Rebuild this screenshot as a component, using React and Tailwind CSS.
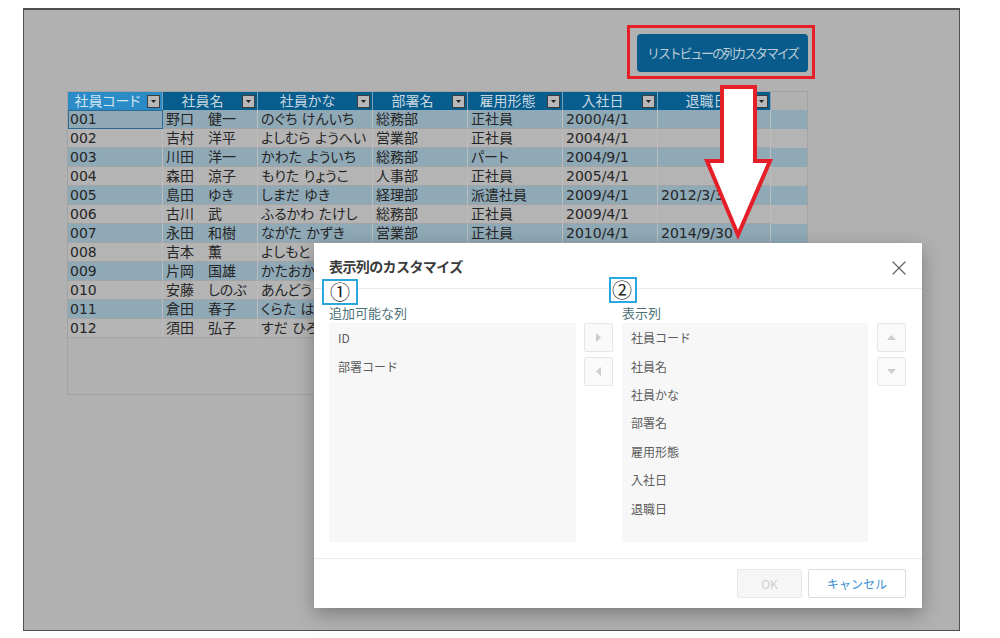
import { X } from 'lucide-react'

const COLS = [
  { label: '社員コード', w: 'w-[95px]' },
  { label: '社員名', w: 'w-[95px]' },
  { label: '社員かな', w: 'w-[115px]' },
  { label: '部署名', w: 'w-[95px]' },
  { label: '雇用形態', w: 'w-[95px]' },
  { label: '入社日', w: 'w-[95px]' },
  { label: '退職日', w: 'w-[113px]' },
]

const ROWS = [
  ['001', '野口　健一', 'のぐち けんいち', '総務部', '正社員', '2000/4/1', ''],
  ['002', '吉村　洋平', 'よしむら ようへい', '営業部', '正社員', '2004/4/1', ''],
  ['003', '川田　洋一', 'かわた よういち', '総務部', 'パート', '2004/9/1', ''],
  ['004', '森田　涼子', 'もりた りょうこ', '人事部', '正社員', '2005/4/1', ''],
  ['005', '島田　ゆき', 'しまだ ゆき', '経理部', '派遣社員', '2009/4/1', '2012/3/31'],
  ['006', '古川　武', 'ふるかわ たけし', '総務部', '正社員', '2009/4/1', ''],
  ['007', '永田　和樹', 'ながた かずき', '営業部', '正社員', '2010/4/1', '2014/9/30'],
  ['008', '吉本　薫', 'よしもと かおる', '人事部', '正社員', '2011/4/1', ''],
  ['009', '片岡　国雄', 'かたおか くにお', '営業部', '正社員', '2012/4/1', ''],
  ['010', '安藤　しのぶ', 'あんどう しのぶ', '経理部', 'パート', '2013/4/1', ''],
  ['011', '倉田　春子', 'くらた はるこ', '総務部', '正社員', '2014/4/1', ''],
  ['012', '須田　弘子', 'すだ ひろこ', '営業部', '正社員', '2015/4/1', ''],
]

const AVAILABLE = ['ID', '部署コード']
const SHOWN = ['社員コード', '社員名', '社員かな', '部署名', '雇用形態', '入社日', '退職日']

function Tri({ dir }) {
  const pts = {
    right: '2,0 7,4.5 2,9',
    left: '7,0 2,4.5 7,9',
    up: '0,7 4.5,2 9,7',
    down: '0,2 4.5,7 9,2',
  }[dir]
  return (
    <svg width="9" height="9" viewBox="0 0 9 9">
      <polygon points={pts} fill="#cdcdcd" />
    </svg>
  )
}

function SideBtn({ dir }) {
  return (
    <button className="flex h-[29px] w-[29px] items-center justify-center rounded-[2px] border border-[#e6e6e6] bg-[#fafafa]">
      <Tri dir={dir} />
    </button>
  )
}

function ColumnList({ items }) {
  return (
    <div className="h-[219px] bg-[#f7f7f7] pt-[1px]">
      {items.map((t) => (
        <div key={t} className="flex h-[28.4px] items-center pl-[9px] text-[12px] text-[#5c5c5c]">
          {t}
        </div>
      ))}
    </div>
  )
}

function Grid() {
  return (
    <div className="ml-[43px] mt-[12px] h-[304px] w-[741px] border border-[#a3a3a3] bg-[#b1b1b1] font-['DejaVu_Sans','Noto_Sans_CJK_JP',sans-serif] [font-feature-settings:'palt']">
      {/* header */}
      <div className="flex h-[18px]">
        {COLS.map((c, i) => (
          <div
            key={c.label}
            className={`${c.w} flex shrink-0 items-center border-r border-[#7d9db1] ${
              i === 0 ? 'bg-[#2b8bc7] text-[#d2e4ef]' : 'bg-[#075d8e] text-[#c8d6df]'
            }`}
          >
            <span className="flex-1 text-center text-[14px] leading-[18px]">{c.label}</span>
            <span className="mr-[2px] flex h-[13px] w-[13px] items-center justify-center border border-[#3d3d3d] bg-[#b9b9b9]">
              <svg width="5" height="3" viewBox="0 0 5 3">
                <polygon points="0,0 5,0 2.5,3" fill="#222" />
              </svg>
            </span>
          </div>
        ))}
      </div>
      {/* rows */}
      {ROWS.map((r, ri) => (
        <div key={r[0]} className={`flex h-[19px] ${ri % 2 === 0 ? 'bg-[#8fa9b7]' : 'bg-[#b4b4b4]'}`}>
          {r.map((v, ci) => (
            <div
              key={ci}
              className={`${COLS[ci].w} shrink-0 overflow-hidden whitespace-nowrap border-b border-r border-b-[#a4a4a4] border-r-[#bdbdbd] text-[14px] leading-[18px] text-[#262626] ${
                ci === 0 ? 'pl-[2px]' : 'pl-[3px]'
              } ${ri === 0 && ci === 0 ? 'outline outline-[1.5px] -outline-offset-[1.5px] outline-[#2b6a92]' : ''}`}
            >
              {v}
            </div>
          ))}
        </div>
      ))}
    </div>
  )
}

function Dialog() {
  return (
    <div className="absolute left-[290px] top-[233px] flex h-[365px] w-[608px] flex-col bg-white shadow-[0_6px_18px_rgba(0,0,0,0.3)]">
      {/* header */}
      <div className="flex h-[46px] shrink-0 items-center justify-between border-b border-[#ebebeb] pl-[15px] pr-[11px]">
        <span className="mt-[2px] text-[14px] font-bold tracking-[-0.6px] text-[#3b3b3b]">表示列のカスタマイズ</span>
        <X size={24} strokeWidth={1.3} className="mt-[5px] text-[#666]" />
      </div>

      {/* annotation numbers */}
      <div className="absolute left-[8px] top-[36px] flex h-[26px] w-[36px] items-center border-2 border-[#2ba6de] bg-white pl-[6px] text-[20px] leading-none text-[#222]">
        ①
      </div>
      <div className="absolute left-[295px] top-[34px] flex h-[26px] w-[28px] items-center border-2 border-[#2ba6de] bg-white pl-[1px] text-[20px] leading-none text-[#222]">
        ②
      </div>

      {/* body */}
      <div className="flex flex-1 pl-[15px] pr-[16px] pt-[15px]">
        <div className="w-[247px]">
          <div className="mb-[2px] h-[17px] text-[13px] leading-[17px] text-[#4d7276]">追加可能な列</div>
          <ColumnList items={AVAILABLE} />
        </div>
        <div className="ml-[8px] flex flex-col gap-[5px] pt-[19px]">
          <SideBtn dir="right" />
          <SideBtn dir="left" />
        </div>
        <div className="ml-[9px] w-[246px]">
          <div className="mb-[2px] h-[17px] text-[13px] leading-[17px] text-[#4d7276]">表示列</div>
          <ColumnList items={SHOWN} />
        </div>
        <div className="ml-[9px] flex flex-col gap-[5px] pt-[19px]">
          <SideBtn dir="up" />
          <SideBtn dir="down" />
        </div>
      </div>

      {/* footer */}
      <div className="flex h-[50px] shrink-0 items-start justify-end gap-[6px] border-t border-[#ebebeb] pr-[16px] pt-[10px]">
        <button className="h-[29px] w-[65px] rounded-[2px] border border-[#e8e8e8] bg-[#f6f6f6] text-[12px] text-[#cfcfcf]">
          OK
        </button>
        <button className="h-[29px] w-[98px] rounded-[2px] border border-[#dcdcdc] bg-white text-[12px] text-[#3a8fd3]">
          キャンセル
        </button>
      </div>
    </div>
  )
}

export default function App() {
  return (
    <div className="relative h-[638px] w-[1000px] overflow-hidden bg-white pl-[23px] pt-[8px] font-['Noto_Sans_CJK_JP',sans-serif]">
      <div className="relative h-[623px] w-[937px] border border-t-2 border-[#505050] bg-[#b1b1b1]">
        {/* customize button, highlighted */}
        <div className="ml-[603px] mt-[15px] flex h-[54px] w-[188px] border-[3px] border-[#e51f28] pb-[4px] pl-[7px] pr-[4px] pt-[6px]">
          <button className="flex flex-1 items-center justify-center rounded-[4px] bg-[#085b8b] text-[13px] tracking-[-2.2px] text-[#bccbd5]">
            リストビューの列カスタマイズ
          </button>
        </div>

        <Grid />
        <Dialog />
      </div>

      {/* annotation arrow */}
      <svg className="pointer-events-none absolute left-0 top-0" width="1000" height="638" viewBox="0 0 1000 638">
        <polygon
          points="722,87 755,87 755,161 770,161 738,235 707,161 722,161"
          fill="#fff"
          stroke="#e51f28"
          strokeWidth="4"
          strokeLinejoin="miter"
        />
      </svg>
    </div>
  )
}
